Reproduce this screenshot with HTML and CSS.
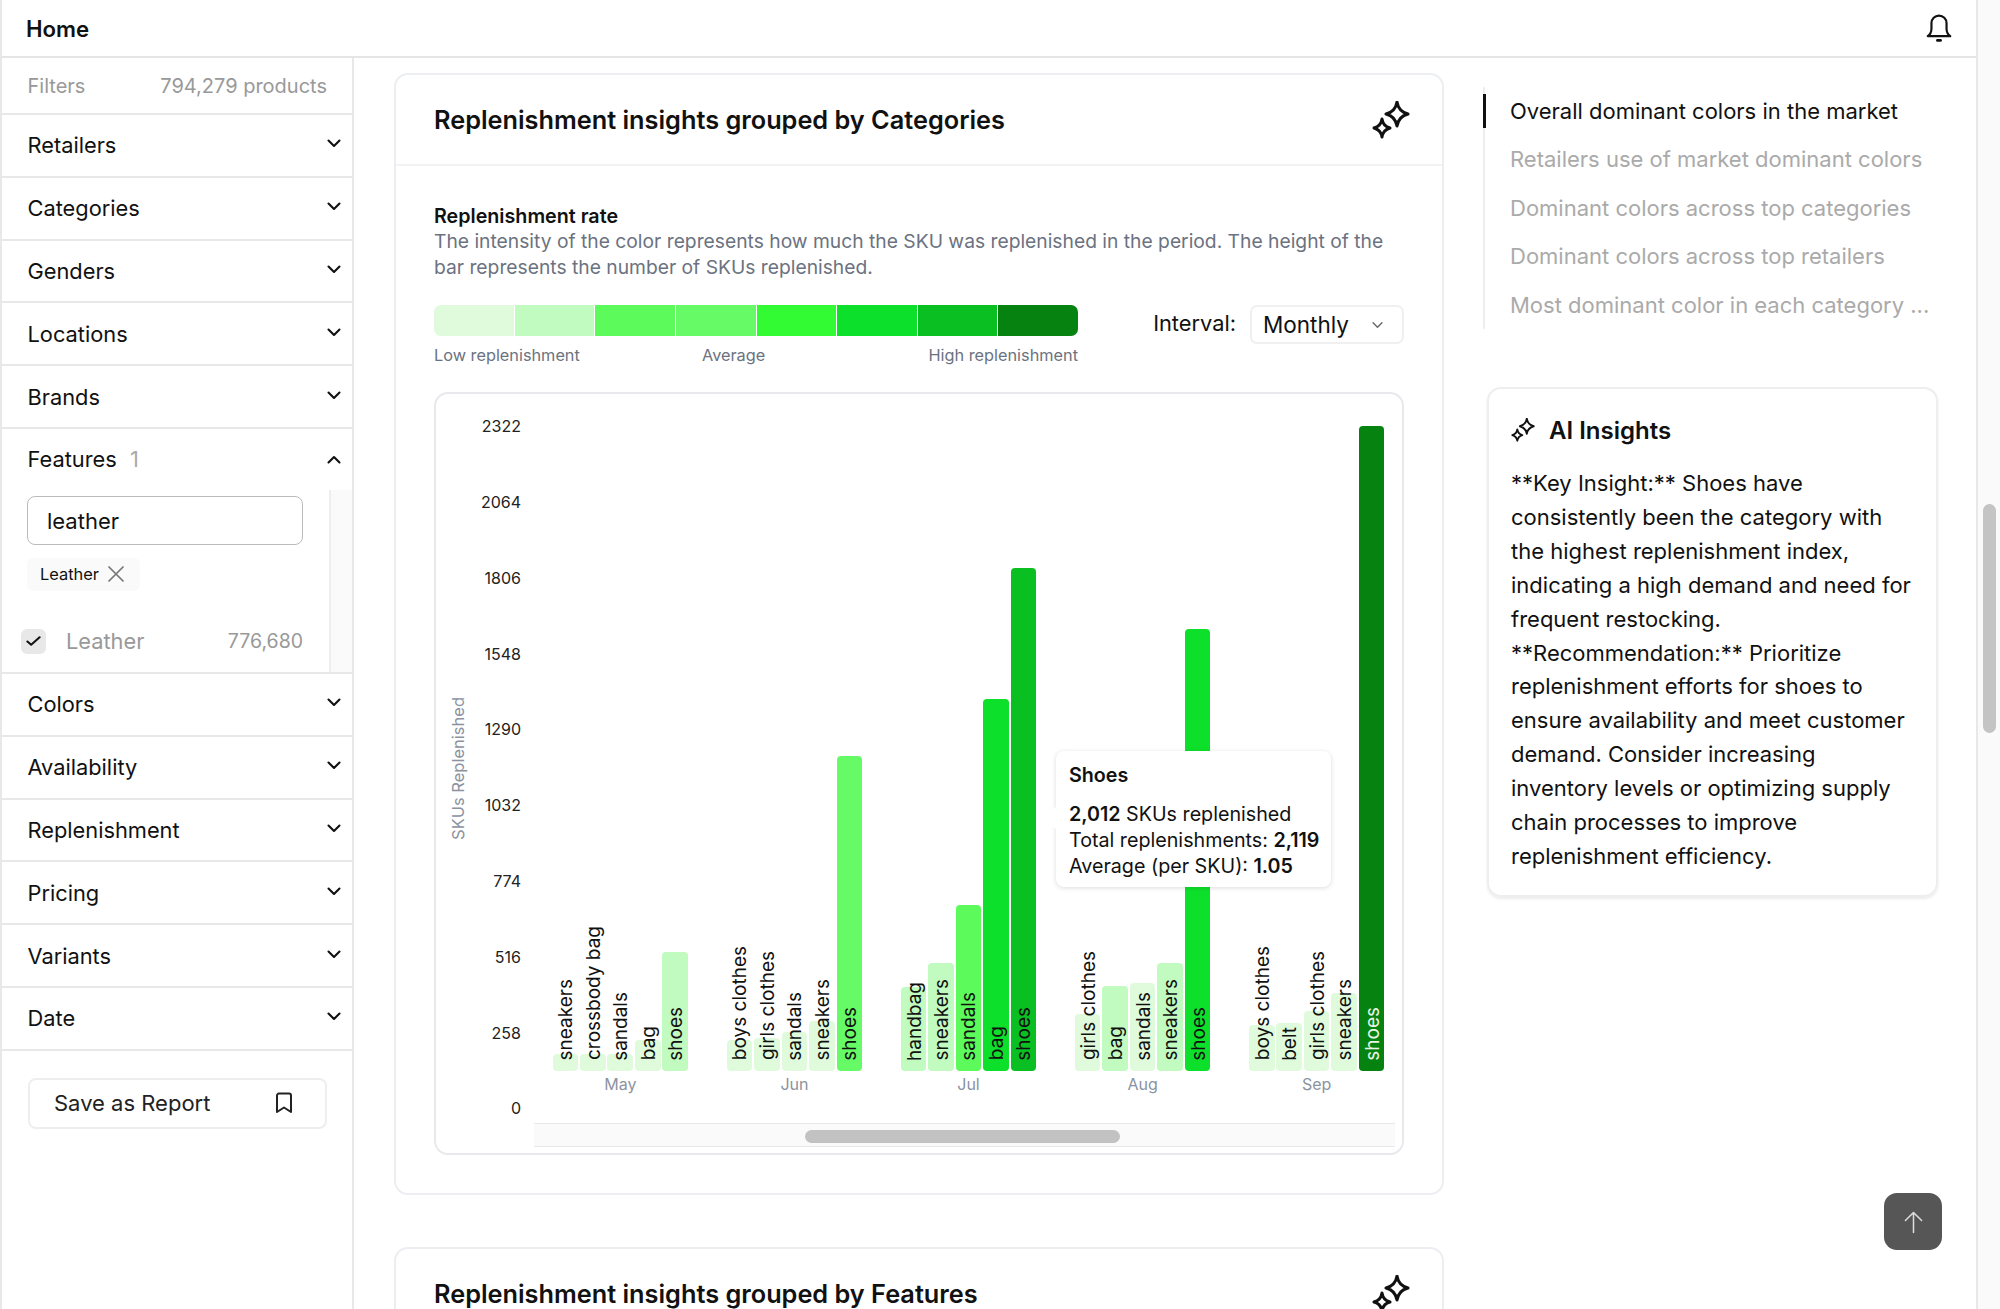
FILE: index.html
```html
<!DOCTYPE html>
<html lang="en">
<head>
  <meta charset="UTF-8">
  <meta name="viewport" content="width=device-width, initial-scale=1.0">
  <title>Home</title>
  <link rel="stylesheet" href="styles.css">
</head>
<body>
  <svg class="icon-defs" aria-hidden="true">
    <symbol id="chev" viewBox="0 0 14 9"><path d="M1.5 1.5 7 7l5.5-5.5" fill="none" stroke="currentColor" stroke-width="2.1" stroke-linecap="round" stroke-linejoin="round"/></symbol>
    <symbol id="sparkle" viewBox="0 0 38 38">
      <path d="M25 1Q26.500 10.500 36 13Q26.500 15.500 25 25Q23.500 15.500 14 13Q23.500 10.500 25 1Z" fill="none" stroke="currentColor" stroke-width="3" stroke-linejoin="round"/>
      <path d="M10 18Q11 25 18 27Q11 29 10 36Q9 29 2 27Q9 25 10 18Z" fill="none" stroke="currentColor" stroke-width="3" stroke-linejoin="round"/>
    </symbol>
  </svg>

  <div class="shell">
    <header class="topbar">
      <span class="topbar-title">Home</span>
      <svg class="bell" viewBox="0 0 24 26" fill="none" stroke="#111" stroke-width="2" stroke-linejoin="round"><path d="M1.500 20.500c2.500-1.500 3.500-4 3.500-7V8.500a7 7 0 0 1 14 0v5c0 3 1 5.500 3.500 7z"/><path d="M10.500 24.500h3" stroke-linecap="round" stroke-width="2.400"/></svg>
    </header>

    <div class="content">
      <aside class="sidebar">
        <div class="filters-head"><span>Filters</span><span>794,279 products</span></div>
        <div class="filter-row"><span>Retailers</span><svg class="chev"><use href="#chev"/></svg></div>
        <div class="filter-row"><span>Categories</span><svg class="chev"><use href="#chev"/></svg></div>
        <div class="filter-row"><span>Genders</span><svg class="chev"><use href="#chev"/></svg></div>
        <div class="filter-row"><span>Locations</span><svg class="chev"><use href="#chev"/></svg></div>
        <div class="filter-row"><span>Brands</span><svg class="chev"><use href="#chev"/></svg></div>

        <div class="filter-open">
          <div class="filter-open-head"><span>Features <span class="filter-count">1</span></span><svg class="chev chev-up"><use href="#chev"/></svg></div>
          <div class="filter-panel">
            <div class="filter-panel-main">
              <div class="filter-input">leather</div>
              <div class="chip">Leather
                <svg class="chip-x" viewBox="0 0 18 18" fill="none" stroke="#777" stroke-width="1.700"><path d="M1.500 1.500l15 15M16.500 1.500l-15 15"/></svg>
              </div>
              <div class="option">
                <span class="checkbox"><svg viewBox="0 0 16 12" fill="none" stroke="#111" stroke-width="2.200" stroke-linecap="round" stroke-linejoin="round"><path d="M1.500 6.500 5.500 10 14.500 2"/></svg></span>
                <span class="option-name">Leather</span>
                <span class="option-count">776,680</span>
              </div>
            </div>
            <div class="filter-panel-track"></div>
          </div>
        </div>

        <div class="filter-row"><span>Colors</span><svg class="chev"><use href="#chev"/></svg></div>
        <div class="filter-row"><span>Availability</span><svg class="chev"><use href="#chev"/></svg></div>
        <div class="filter-row"><span>Replenishment</span><svg class="chev"><use href="#chev"/></svg></div>
        <div class="filter-row"><span>Pricing</span><svg class="chev"><use href="#chev"/></svg></div>
        <div class="filter-row"><span>Variants</span><svg class="chev"><use href="#chev"/></svg></div>
        <div class="filter-row"><span>Date</span><svg class="chev"><use href="#chev"/></svg></div>

        <button class="save-btn"><span>Save as Report</span>
          <svg viewBox="0 0 18 22" fill="none" stroke="#222" stroke-width="2" stroke-linejoin="round"><path d="M2 3.500a2 2 0 0 1 2-2h10a2 2 0 0 1 2 2V20l-7-4.500L2 20z"/></svg>
        </button>
      </aside>

      <main class="main">
        <section class="card">
          <div class="card-head">
            <h2>Replenishment insights grouped by Categories</h2>
            <svg class="sparkle"><use href="#sparkle"/></svg>
          </div>
          <div class="card-body">
            <h3 class="rate-title">Replenishment rate</h3>
            <p class="rate-desc">The intensity of the color represents how much the SKU was replenished in the period. The height of the bar represents the number of SKUs replenished.</p>

            <div class="legend-row">
              <div class="legend">
                <div class="legend-bar">
                  <span class="c1"></span><span class="c2"></span><span class="c3"></span><span class="c4"></span><span class="c5"></span><span class="c6"></span><span class="c7"></span><span class="c8"></span>
                </div>
                <div class="legend-labels"><span>Low replenishment</span><span class="legend-mid">Average</span><span>High replenishment</span></div>
              </div>
              <div class="interval">
                <span class="interval-label">Interval:</span>
                <div class="select"><span>Monthly</span><svg viewBox="0 0 14 9"><path d="M2 2l5 5 5-5" fill="none" stroke="#666" stroke-width="1.600" stroke-linecap="round" stroke-linejoin="round"/></svg></div>
              </div>
            </div>

            <div class="chart">
              <div class="chart-body">
                <div class="axis-title"><span>SKUs Replenished</span></div>
                <div class="y-axis">
                  <span>2322</span><span>2064</span><span>1806</span><span>1548</span><span>1290</span><span>1032</span><span>774</span><span>516</span><span>258</span><span>0</span>
                </div>
                <div class="plot">
                  <div class="group">
                    <div class="bars">
                      <div class="bar c1" style="height:17px"><span>sneakers</span></div>
                      <div class="bar c1" style="height:17px"><span>crossbody bag</span></div>
                      <div class="bar c1" style="height:17px"><span>sandals</span></div>
                      <div class="bar c1" style="height:31px"><span>bag</span></div>
                      <div class="bar c2" style="height:119px"><span>shoes</span></div>
                    </div>
                    <div class="month">May</div>
                  </div>
                  <div class="group">
                    <div class="bars">
                      <div class="bar c1" style="height:31px"><span>boys clothes</span></div>
                      <div class="bar c1" style="height:33px"><span>girls clothes</span></div>
                      <div class="bar c1" style="height:39px"><span>sandals</span></div>
                      <div class="bar c1" style="height:50px"><span>sneakers</span></div>
                      <div class="bar c4" style="height:315px"><span>shoes</span></div>
                    </div>
                    <div class="month">Jun</div>
                  </div>
                  <div class="group">
                    <div class="bars">
                      <div class="bar c2" style="height:84px"><span>handbag</span></div>
                      <div class="bar c2" style="height:108px"><span>sneakers</span></div>
                      <div class="bar c3" style="height:166px"><span>sandals</span></div>
                      <div class="bar c6" style="height:372px"><span>bag</span></div>
                      <div class="bar c7" style="height:503px"><span>shoes</span></div>
                    </div>
                    <div class="month">Jul</div>
                  </div>
                  <div class="group">
                    <div class="bars">
                      <div class="bar c1" style="height:57px"><span>girls clothes</span></div>
                      <div class="bar c2" style="height:85px"><span>bag</span></div>
                      <div class="bar c1" style="height:88px"><span>sandals</span></div>
                      <div class="bar c2" style="height:108px"><span>sneakers</span></div>
                      <div class="bar c6" style="height:442px"><span>shoes</span></div>
                    </div>
                    <div class="month">Aug</div>
                  </div>
                  <div class="group">
                    <div class="bars">
                      <div class="bar c1" style="height:46px"><span>boys clothes</span></div>
                      <div class="bar c1" style="height:48px"><span>belt</span></div>
                      <div class="bar c1" style="height:60px"><span>girls clothes</span></div>
                      <div class="bar c1" style="height:78px"><span>sneakers</span></div>
                      <div class="bar c8 bar-dark" style="height:645px"><span>shoes</span></div>
                    </div>
                    <div class="month">Sep</div>
                  </div>

                  <div class="tooltip">
                    <div class="tooltip-title">Shoes</div>
                    <div><b>2,012</b> SKUs replenished</div>
                    <div>Total replenishments: <b>2,119</b></div>
                    <div>Average (per SKU): <b>1.05</b></div>
                  </div>
                </div>
              </div>
              <div class="chart-scroll"><div class="chart-scroll-thumb"></div></div>
            </div>
          </div>
        </section>

        <section class="card">
          <div class="card-head">
            <h2>Replenishment insights grouped by Features</h2>
            <svg class="sparkle"><use href="#sparkle"/></svg>
          </div>
        </section>
      </main>

      <aside class="side">
        <nav class="toc">
          <a class="toc-item active">Overall dominant colors in the market</a>
          <a class="toc-item">Retailers use of market dominant colors</a>
          <a class="toc-item">Dominant colors across top categories</a>
          <a class="toc-item">Dominant colors across top retailers</a>
          <a class="toc-item">Most dominant color in each category ...</a>
        </nav>

        <div class="ai-card">
          <div class="ai-head">
            <svg class="ai-icon"><use href="#sparkle"/></svg>
            <span>AI Insights</span>
          </div>
          <p>**Key Insight:** Shoes have consistently been the category with the highest replenishment index, indicating a high demand and need for frequent restocking.<br>**Recommendation:** Prioritize replenishment efforts for shoes to ensure availability and meet customer demand. Consider increasing inventory levels or optimizing supply chain processes to improve replenishment efficiency.</p>
        </div>
      </aside>
    </div>
  </div>

  <div class="page-track"><div class="page-thumb"></div></div>

  <button class="to-top">
    <svg viewBox="0 0 20 24" fill="none" stroke="#ddd" stroke-width="1.600" stroke-linecap="round" stroke-linejoin="round"><path d="M10 23V2M1.500 10.500 10 2l8.500 8.500"/></svg>
  </button>
</body>
</html>
```

FILE: styles.css
```css
* {
  box-sizing: border-box;
}

html, body {
  margin: 0;
  height: 1309px;
  overflow: hidden;
}

body {
  position: relative;
  display: flex;
  background: #fff;
  color: #111;
  font-family: Inter, "Noto Sans", sans-serif;
  font-size: 21.800px;
}

.icon-defs {
  position: absolute;
  width: 0;
  height: 0;
}

/* Frame */
.shell {
  flex: 1;
  min-width: 0;
  border-left: 2px solid #e8e8e8;
  border-right: 2px solid #e8e8e8;
}

.topbar {
  display: flex;
  align-items: center;
  justify-content: space-between;
  height: 58px;
  padding: 0 24px 0 24px;
  border-bottom: 2px solid #e5e5e5;
}

.topbar-title {
  font-size: 22.200px;
  font-weight: 600;
}

.bell {
  width: 26px;
  height: 28px;
}

.content {
  display: flex;
  height: 1251px;
}

.page-track {
  width: 22px;
  padding: 504px 4px 0 5px;
  background: #fafafa;
}

.page-thumb {
  height: 229px;
  border-radius: 7px;
  background: #c4c4c4;
}

/* Filters */
.sidebar {
  width: 352px;
  flex-shrink: 0;
  border-right: 2px solid #e8e8e8;
}

.filters-head {
  display: flex;
  justify-content: space-between;
  align-items: center;
  height: 57px;
  padding: 0 25px 0 25.500px;
  border-bottom: 2px solid #e8e8e8;
  color: #999;
  font-size: 20px;
}

.filter-row {
  display: flex;
  justify-content: space-between;
  align-items: center;
  height: 62.800px;
  padding: 0 11px 0 25.500px;
  border-bottom: 2px solid #e8e8e8;
}

.chev {
  width: 14px;
  height: 9px;
  margin-bottom: 3px;
  color: #111;
}

.chev-up {
  transform: rotate(180deg);
  margin-bottom: 0;
}

.filter-open {
  border-bottom: 2px solid #e8e8e8;
}

.filter-open-head {
  display: flex;
  justify-content: space-between;
  align-items: center;
  height: 61px;
  padding: 0 11px 0 25.500px;
}

.filter-count {
  margin-left: 7px;
  color: #aaa;
}

.filter-panel {
  display: flex;
  height: 182px;
}

.filter-panel-main {
  width: 327px;
  padding: 6px 26px 0 25px;
}

.filter-panel-track {
  flex: 1;
  background: #fafafa;
  border-left: 2px solid #eee;
}

.filter-input {
  display: flex;
  align-items: center;
  height: 49px;
  padding: 1px 0 0 19px;
  border: 1.500px solid #bbb;
  border-radius: 8px;
  font-size: 22px;
}

.chip {
  display: inline-flex;
  align-items: center;
  gap: 8px;
  height: 33px;
  margin-top: 13px;
  padding: 0 15px 0 13px;
  border-radius: 6px;
  background: #fafafa;
  font-size: 16.400px;
}

.chip-x {
  width: 18px;
  height: 18px;
}

.option {
  display: flex;
  align-items: center;
  margin: 38px 0 0 -6px;
  height: 25px;
}

.checkbox {
  display: flex;
  align-items: center;
  justify-content: center;
  width: 25px;
  height: 25px;
  border-radius: 6px;
  background: #e8e8e8;
}

.checkbox svg {
  width: 15px;
  height: 12px;
}

.option-name {
  margin-left: 20px;
  color: #999;
}

.option-count {
  margin-left: auto;
  color: #999;
  font-size: 19.500px;
}

.save-btn {
  display: flex;
  align-items: center;
  justify-content: space-between;
  width: 299px;
  height: 51px;
  margin: 27px 0 0 26px;
  padding: 0 32px 0 24px;
  background: #fff;
  border: 2px solid #eee;
  border-radius: 8px;
  color: #222;
  font: inherit;
  font-size: 22px;
}

.save-btn svg {
  width: 18px;
  height: 22px;
}

/* Main column */
.main {
  width: 1106px;
  flex-shrink: 0;
  padding: 15px 16px 0 40px;
  overflow: hidden;
}

.card {
  border: 2px solid #eceef1;
  border-radius: 14px;
  margin-bottom: 52px;
}

.card-head {
  display: flex;
  justify-content: space-between;
  align-items: center;
  height: 91px;
  padding: 0 32px 0 38px;
  border-bottom: 2px solid #f2f3f5;
}

.card-head h2 {
  margin: 0 0 1px;
  font-size: 25.300px;
  font-weight: 600;
}

.sparkle {
  width: 38px;
  height: 38px;
}

.card-body {
  padding: 37px 38px 38px;
}

.rate-title {
  margin: 0;
  font-size: 19.700px;
  font-weight: 600;
  line-height: 26px;
}

.rate-desc {
  margin: 0;
  color: #6b7280;
  font-size: 19.250px;
  line-height: 25.700px;
}

.legend-row {
  display: flex;
  justify-content: space-between;
  margin-top: 25px;
  height: 87px;
}

.legend {
  width: 644px;
}

.legend-bar {
  display: flex;
  gap: 1px;
  height: 31px;
  border-radius: 7px;
  overflow: hidden;
}

.legend-bar span {
  flex: 1;
}

.legend-labels {
  position: relative;
  display: flex;
  justify-content: space-between;
  margin-top: 9px;
  color: #6b7280;
  font-size: 16.300px;
}

.legend-mid {
  position: absolute;
  left: 268px;
}

.c1 { background: #dffbdc; }
.c2 { background: #c1fbc0; }
.c3 { background: #5cfa5a; }
.c4 { background: #66fb66; }
.c5 { background: #33fb33; }
.c6 { background: #0de02a; }
.c7 { background: #0abf22; }
.c8 { background: #068211; }

.interval {
  display: flex;
  align-items: flex-start;
  gap: 14px;
}

.interval-label {
  line-height: 36px;
  font-size: 21.800px;
}

.select {
  display: flex;
  align-items: center;
  justify-content: space-between;
  width: 154px;
  height: 39px;
  padding: 0 18px 0 11px;
  border: 2px solid #f0f0f0;
  border-radius: 7px;
  font-size: 22.500px;
}

.select svg {
  width: 13px;
  height: 8px;
}

/* Chart */
.chart {
  height: 763px;
  border: 2px solid #e7e9ec;
  border-radius: 14px;
}

.chart-body {
  display: flex;
  height: 729px;
  padding-top: 22px;
}

.axis-title {
  display: flex;
  align-items: center;
  justify-content: center;
  width: 44px;
  height: 705px;
  color: #8b93a1;
  font-size: 16.500px;
}

.axis-title span {
  writing-mode: vertical-rl;
  transform: rotate(180deg);
  white-space: nowrap;
}

.y-axis {
  display: flex;
  flex-direction: column;
  justify-content: space-between;
  align-items: flex-end;
  width: 41px;
  height: 702px;
  color: #222;
  font-size: 16px;
  line-height: 20px;
}

.plot {
  position: relative;
  flex: 1;
  display: flex;
  align-items: flex-end;
  gap: 38.400px;
  margin-left: 12px;
  padding: 0 0 26px 19.500px;
  margin-top: -22px;
}

.group {
  width: 135.700px;
}

.bars {
  display: flex;
  align-items: flex-end;
  gap: 1.800px;
}

.bar {
  position: relative;
  width: 25.700px;
  border-radius: 4px;
}

.bar span {
  position: absolute;
  bottom: 11px;
  left: 50%;
  writing-mode: vertical-rl;
  transform: translateX(-50%) rotate(180deg);
  white-space: nowrap;
  font-size: 19px;
  line-height: 1;
  color: #111;
}

.bar-dark span {
  color: #e6f5e6;
}

.month {
  height: 26px;
  color: #8b93a1;
  font-size: 16px;
  line-height: 26px;
  text-align: center;
}

.tooltip {
  position: absolute;
  left: 523px;
  top: 357px;
  width: 275px;
  height: 136px;
  padding: 11px 13px;
  background: #fff;
  border-radius: 8px;
  box-shadow: 0 1px 5px rgba(0, 0, 0, 0.14);
  font-size: 19.700px;
  line-height: 26px;
  white-space: nowrap;
}

.tooltip::before {
  content: "";
  position: absolute;
  left: -8px;
  top: 59px;
  width: 16px;
  height: 16px;
  background: #fff;
  transform: rotate(45deg);
}

.tooltip b {
  font-weight: 600;
}

.tooltip-title {
  position: relative;
  font-weight: 600;
  margin-bottom: 13px;
}

.chart-scroll {
  height: 24px;
  margin: 0 7px 0 98px;
  padding: 6px 0 0 271px;
  background: #fafafa;
  border-top: 1.500px solid #e8e8e8;
  border-bottom: 1.500px solid #e8e8e8;
}

.chart-scroll-thumb {
  width: 315px;
  height: 13px;
  border-radius: 7px;
  background: #c2c2c2;
}

/* Right column */
.side {
  flex: 1;
  min-width: 0;
  padding: 29px 0 0 23px;
}

.toc {
  border-left: 2px solid #eeeeee;
}

.toc-item {
  position: relative;
  display: block;
  padding: 1px 0 0 25px;
  color: #aaa;
  font-size: 22px;
  line-height: 47.400px;
  white-space: nowrap;
}

.toc-item.active {
  color: #111;
}

.toc-item.active::before {
  content: "";
  position: absolute;
  left: -2px;
  top: 7px;
  width: 3px;
  height: 34px;
  background: #111;
}

.ai-card {
  width: 451px;
  height: 510px;
  margin: 58px 0 0 4px;
  padding: 24px 22px 0 22px;
  border: 2px solid #eee;
  border-radius: 14px;
  box-shadow: 0 2px 3px rgba(0, 0, 0, 0.08);
}

.ai-head {
  display: flex;
  align-items: center;
  gap: 14px;
  height: 34px;
  font-size: 24px;
  font-weight: 600;
}

.ai-icon {
  width: 24px;
  height: 24px;
}

.ai-card p {
  margin: 20px 0 0;
  font-size: 22px;
  line-height: 33.900px;
}

.to-top {
  position: absolute;
  right: 58px;
  bottom: 59px;
  width: 58px;
  height: 57px;
  padding: 0;
  display: flex;
  align-items: center;
  justify-content: center;
  background: #565656;
  border: none;
  border-radius: 13px;
}

.to-top svg {
  width: 19px;
  height: 24px;
}
```
